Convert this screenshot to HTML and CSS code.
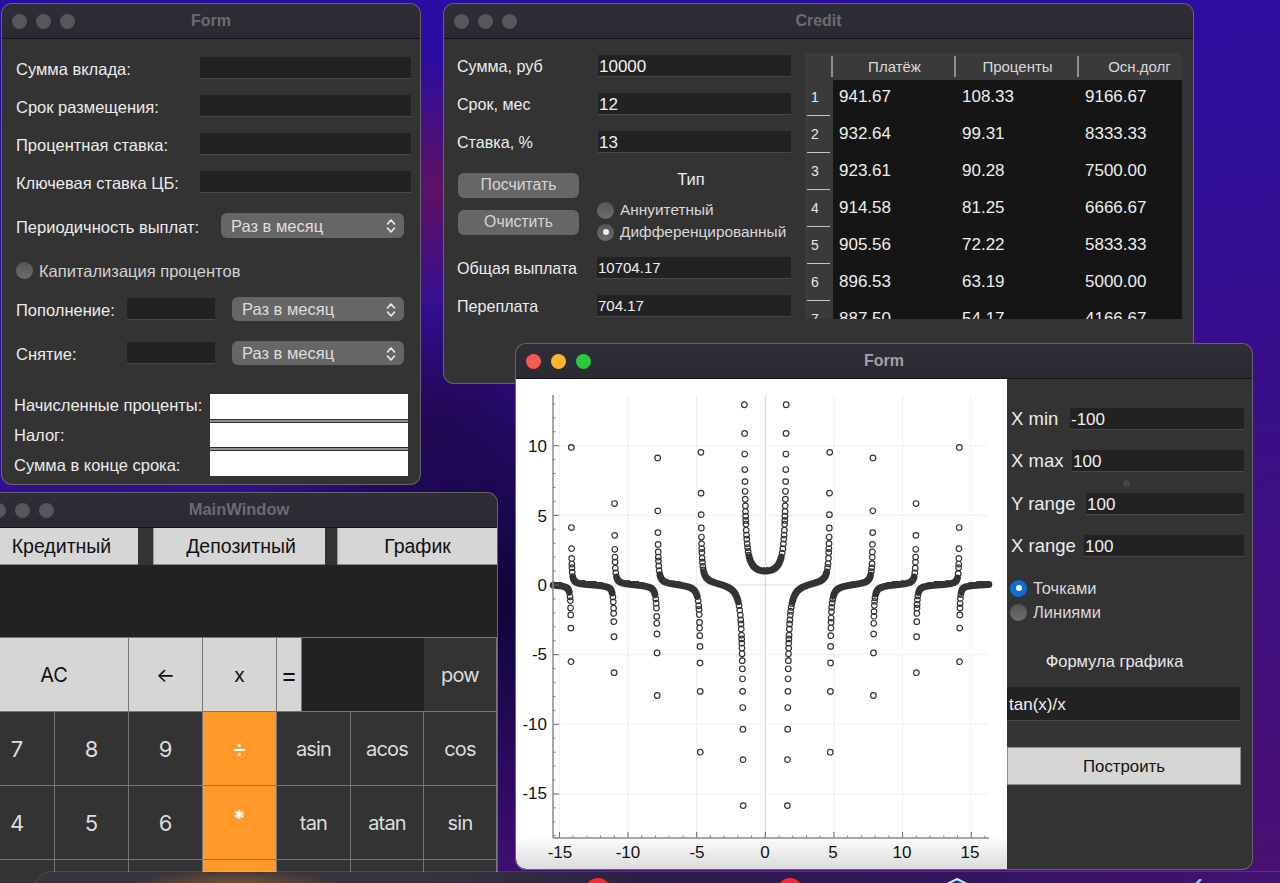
FILE: index.html
```html
<!DOCTYPE html>
<html lang="ru">
<head>
<meta charset="utf-8">
<title>Desktop</title>
<link rel="stylesheet" href="styles.css">
</head>
<body>
<svg class="defs" width="0" height="0"><defs>
  <symbol id="chev" viewBox="0 0 10 16"><path d="M1.5 6 5 2l3.5 4M1.5 10 5 14l3.5-4" fill="none" stroke="#eee" stroke-width="1.6" stroke-linecap="round" stroke-linejoin="round"/></symbol>
</defs></svg>

<section class="win win-deposit">
  <header class="titlebar"><div class="lights"><i></i><i></i><i></i></div><h1>Form</h1></header>
  <div class="dep-body">
    <div class="dep-row"><label>Сумма вклада:</label><div class="field"></div></div>
    <div class="dep-row"><label>Срок размещения:</label><div class="field"></div></div>
    <div class="dep-row"><label>Процентная ставка:</label><div class="field"></div></div>
    <div class="dep-row"><label>Ключевая ставка ЦБ:</label><div class="field"></div></div>
    <div class="dep-period"><label>Периодичность выплат:</label><div class="combo"><span>Раз в месяц</span><svg class="chev"><use href="#chev"/></svg></div></div>
    <div class="dep-cap"><span class="radio"></span><span>Капитализация процентов</span></div>
    <div class="dep-flow first"><label>Пополнение:</label><div class="field"></div><div class="combo"><span>Раз в месяц</span><svg class="chev"><use href="#chev"/></svg></div></div>
    <div class="dep-flow"><label>Снятие:</label><div class="field"></div><div class="combo"><span>Раз в месяц</span><svg class="chev"><use href="#chev"/></svg></div></div>
    <div class="dep-results">
      <div class="res-row"><label>Начисленные проценты:</label><div class="res-field lined"></div></div>
      <div class="res-row"><label>Налог:</label><div class="res-field lined"></div></div>
      <div class="res-row"><label>Сумма в конце срока:</label><div class="res-field"></div></div>
    </div>
  </div>
</section>

<section class="win win-credit">
  <header class="titlebar"><div class="lights"><i></i><i></i><i></i></div><h1>Credit</h1></header>
  <div class="cr-body">
    <div class="cr-left">
      <div class="cr-row"><label>Сумма, руб</label><div class="field val">10000</div></div>
      <div class="cr-row"><label>Срок, мес</label><div class="field val">12</div></div>
      <div class="cr-row"><label>Ставка, %</label><div class="field val">13</div></div>
      <div class="cr-mid">
        <div class="cr-btns"><button class="mac-btn">Посчитать</button><button class="mac-btn">Очистить</button></div>
        <div class="cr-type">
          <div class="cr-type-title">Тип</div>
          <div class="opt"><span class="radio"></span><span>Аннуитетный</span></div>
          <div class="opt"><span class="radio on"></span><span>Дифференцированный</span></div>
        </div>
      </div>
      <div class="cr-row res"><label>Общая выплата</label><div class="field val small">10704.17</div></div>
      <div class="cr-row res second"><label>Переплата</label><div class="field val small">704.17</div></div>
    </div>
    <div class="cr-table">
      <table>
        <thead><tr><th class="corner"></th><th>Платёж</th><th>Проценты</th><th class="last">Осн.долг</th></tr></thead>
        <tbody>
          <tr><th>1</th><td>941.67</td><td>108.33</td><td>9166.67</td></tr>
          <tr><th>2</th><td>932.64</td><td>99.31</td><td>8333.33</td></tr>
          <tr><th>3</th><td>923.61</td><td>90.28</td><td>7500.00</td></tr>
          <tr><th>4</th><td>914.58</td><td>81.25</td><td>6666.67</td></tr>
          <tr><th>5</th><td>905.56</td><td>72.22</td><td>5833.33</td></tr>
          <tr><th>6</th><td>896.53</td><td>63.19</td><td>5000.00</td></tr>
          <tr><th>7</th><td>887.50</td><td>54.17</td><td>4166.67</td></tr>
        </tbody>
      </table>
    </div>
  </div>
</section>

<section class="win win-main">
  <header class="titlebar"><div class="lights"><i></i><i></i><i></i></div><h1>MainWindow</h1></header>
  <div class="tabs">
    <button class="tab t1">Кредитный</button>
    <button class="tab t2">Депозитный</button>
    <button class="tab t3">График</button>
  </div>
  <div class="display"></div>
  <div class="keys">
    <div class="key light s2">AC</div><div class="key light">←</div><div class="key light">x</div><div class="key light eq">=</div><div class="key box s2"></div><div class="key fn">pow</div>
    <div class="key">7</div><div class="key">8</div><div class="key">9</div><div class="key op">÷</div><div class="key fn s2">asin</div><div class="key fn">acos</div><div class="key fn">cos</div>
    <div class="key">4</div><div class="key">5</div><div class="key">6</div><div class="key op star">*</div><div class="key fn s2">tan</div><div class="key fn">atan</div><div class="key fn">sin</div>
    <div class="key"></div><div class="key"></div><div class="key"></div><div class="key op"></div><div class="key fn s2"></div><div class="key fn"></div><div class="key fn"></div>
  </div>
</section>

<section class="win win-graph">
  <header class="titlebar active"><div class="lights"><i class="red"></i><i class="yellow"></i><i class="green"></i></div><h1>Form</h1></header>
  <div class="gr-body">
    <div class="plot">
      <svg id="plot" width="491" height="489" viewBox="0 0 491 489">
        <g id="grid"></g>
        <g id="dots"></g>
        <g id="axes"></g>
        <g class="ylabels">
          <text x="31" y="73">10</text><text x="31" y="143">5</text><text x="31" y="212">0</text>
          <text x="31" y="281">-5</text><text x="31" y="351">-10</text><text x="31" y="420">-15</text>
        </g>
        <g class="xlabels">
          <text x="44" y="479">-15</text><text x="112" y="479">-10</text><text x="181" y="479">-5</text><text x="249" y="479">0</text>
          <text x="317" y="479">5</text><text x="386" y="479">10</text><text x="454" y="479">15</text>
        </g>
      </svg>
    </div>
    <div class="side">
      <div class="side-row"><label class="l-xmin">X min</label><div class="field val">-100</div></div>
      <div class="side-row"><label class="l-xmax">X max</label><div class="field val">100</div></div>
      <div class="side-row"><label class="l-yr">Y range</label><div class="field val">100</div></div>
      <div class="side-row"><label class="l-xr">X range</label><div class="field val">100</div></div>
      <span class="stray"></span>
      <div class="side-opts">
        <div class="opt"><span class="radio blue"></span><span>Точками</span></div>
        <div class="opt"><span class="radio"></span><span>Линиями</span></div>
      </div>
      <div class="formula-title">Формула графика</div>
      <div class="field val formula">tan(x)/x</div>
      <button class="build">Построить</button>
    </div>
  </div>
</section>

<div class="dock">
  <span class="dock-icon red one"></span>
  <span class="dock-icon red two"></span>
  <svg class="dock-hex" width="24" height="12" viewBox="0 0 24 12"><path d="M12 1 22 6v8H2V6z" fill="#1d3f86" stroke="#dfe8f5" stroke-width="2"/></svg>
  <svg class="dock-tick" width="8" height="5" viewBox="0 0 8 5"><path d="M1 5 6 0" stroke="#9cc4ea" stroke-width="2.5"/></svg>
</div>
<script src="script.js"></script>
</body>
</html>
```
FILE: styles.css
```css
* { box-sizing: border-box; }
html, body { margin: 0; height: 100%; overflow: hidden; }
body {
  position: relative;
  width: 1280px;
  height: 883px;
  font-family: "Liberation Sans", Arial, sans-serif;
  color: #ececec;
  font-size: 16.5px;
  background:
    radial-gradient(110px 130px at 432px 190px, #5e1262 0, rgba(94,18,98,0) 100%),
    radial-gradient(300px 300px at 500px 600px, #10043a 0, rgba(16,4,58,0) 100%),
    radial-gradient(120px 130px at 430px 430px, #2a0a60 0, rgba(42,10,96,0) 100%),
    linear-gradient(170deg, #2a0ca6 0, #2f0e9a 30%, #3a0f86 60%, #4a0f72 100%);
}
.defs { position: absolute; }
label { display: block; padding-top: 1px; line-height: 18px; }

/* windows on the desktop */
.win {
  position: absolute;
  background: #333;
  border-radius: 10px;
  overflow: hidden;
  box-shadow: 0 0 0 1px #66636b;
}
.win-deposit { left: 2px; top: 4px; width: 418px; height: 480px; }
.win-credit { left: 444px; top: 4px; width: 749px; height: 379px; }
.win-main { left: -20px; top: 493px; width: 517px; height: 400px; }
.win-graph { left: 516px; top: 344px; width: 736px; height: 525px; }

.titlebar {
  height: 35px;
  display: grid;
  grid-template-columns: 1fr auto 1fr;
  align-items: center;
  padding: 0 10px;
  background: linear-gradient(#2f2d35, #2b2931);
  border-bottom: 1px solid #141318;
}
.titlebar h1 {
  margin: 0 0 1px;
  grid-column: 2;
  grid-row: 1;
  font-size: 16px;
  font-weight: 700;
  color: #6c6a72;
}
.titlebar.active h1 { color: #a2a1a6; }
.lights { grid-column: 1; grid-row: 1; display: flex; gap: 9px; }
.lights i { width: 15px; height: 15px; border-radius: 50%; background: #57565d; }
.lights .red { background: #fb5a54; }
.lights .yellow { background: #fdb52f; }
.lights .green { background: #28c83f; }
.win-graph .lights { gap: 10px; }
.win-main .titlebar { padding-left: 11px; }
.win-main .titlebar h1 { font-size: 16.5px; }

.field {
  background: #222;
  border-bottom: 1px solid #484848;
  height: 22px;
}
.val { font-size: 17px; line-height: 23px; color: #f0f0f0; padding-left: 1px; overflow: hidden; }
.val.small { font-size: 15px; line-height: 22px; }

.combo {
  height: 25px;
  background: #666;
  border-radius: 6px;
  display: flex;
  align-items: center;
  justify-content: space-between;
  padding: 1px 8px 0 10px;
  color: #dedede;
}
.chev { width: 10px; height: 16px; }

.radio {
  display: inline-block;
  flex: none;
  width: 17px;
  height: 17px;
  border-radius: 50%;
  background: linear-gradient(#555, #6d6d6d);
  position: relative;
}
.radio.on::after, .radio.blue::after {
  content: "";
  position: absolute;
  left: 5.5px;
  top: 5.5px;
  width: 6px;
  height: 6px;
  border-radius: 50%;
  background: #eee;
}
.radio.blue { background: #0a6fdc; }
.radio.blue::after { background: #fff; }
.opt { display: flex; align-items: center; gap: 6px; color: #d8d8d8; }

/* deposit form */
.dep-body { padding: 18px 9px 0 14px; }
.dep-row {
  display: grid;
  grid-template-columns: 184px 211px;
  align-items: center;
  height: 22px;
  margin-bottom: 16px;
}
.dep-period {
  display: grid;
  grid-template-columns: 205px 183px;
  align-items: center;
  margin-top: 20px;
}
.dep-period label { padding-top: 3px; }
.dep-cap { display: flex; align-items: center; gap: 6px; margin-top: 23px; height: 18px; color: #d2d2d2; }
.dep-cap span:last-child { padding-top: 3px; }
.dep-flow {
  display: grid;
  grid-template-columns: 111px 88px 189px;
  align-items: center;
  margin-top: 20px;
}
.dep-flow.first { margin-top: 18px; }
.dep-flow .combo { margin-left: 17px; width: 172px; height: 24px; }
.dep-results { margin: 29px 0 0 -2px; display: flex; flex-direction: column; gap: 4px; }
.res-row {
  display: grid;
  grid-template-columns: 196px 198px;
  align-items: center;
  height: 24.5px;
}
.res-row:first-child label { padding: 0 0 3px; }
.res-row:last-child label { padding-top: 4px; }
.res-field { height: 100%; background: #fff; }
.res-field.lined { box-shadow: 0 1px 0 #2b2b2b, 0 3px 0 #8d8d8d; }

/* credit */
.cr-body { display: flex; padding: 14px 11px 0 13px; gap: 14px; font-size: 16.1px; }
.cr-left { width: 334px; flex: none; }
.cr-row {
  display: grid;
  grid-template-columns: 141px 193px;
  align-items: center;
  height: 22px;
  margin-top: 16px;
}
.cr-row label { padding-top: 0; }
.cr-row:first-child { margin-top: 2px; }
.cr-row.res { margin-top: 0; }
.cr-row.res.second { margin-top: 16px; }
.cr-row.res .field { margin-left: -1px; width: 194px; }
.cr-mid { display: flex; height: 104px; padding-top: 20px; }
.cr-btns { width: 141px; flex: none; display: flex; flex-direction: column; gap: 12px; padding-left: 1px; }
.mac-btn {
  width: 121px;
  height: 25px;
  border: 0;
  padding: 0 0 2px;
  border-radius: 6px;
  background: #666;
  color: #d6d6d6;
  font: 15.8px "Liberation Sans", Arial, sans-serif;
}
.cr-type { margin-left: -1px; width: 194px; }
.cr-type-title { text-align: center; line-height: 18px; margin: -3px 6px 11px 0; font-size: 16.5px; }
.cr-type .opt { height: 22px; gap: 6px; font-size: 15.4px; }
.cr-table { width: 377px; height: 266px; overflow: hidden; flex: none; background: #151515; }
table { border-collapse: collapse; table-layout: fixed; width: 377px; }
thead th {
  height: 27px;
  padding: 0;
  background: #3a3a3a;
  font-size: 15px;
  font-weight: 400;
  color: #d8d8d8;
  position: relative;
}
thead th:nth-child(1) { width: 28px; }
thead th:nth-child(2), thead th:nth-child(3) { width: 123px; }
thead th.last { padding-left: 18px; }
thead th:not(.corner)::before {
  content: "";
  position: absolute;
  left: -2px;
  top: 3px;
  bottom: 3px;
  width: 2px;
  background: #8f8f8f;
}
tbody th {
  height: 37px;
  padding: 0 0 4px 6px;
  background: #3a3a3a;
  font-size: 14px;
  font-weight: 400;
  text-align: left;
  color: #e8e8e8;
  position: relative;
}
tbody th::after {
  content: "";
  position: absolute;
  left: 2px;
  right: 3px;
  bottom: 1px;
  height: 1px;
  background: #c4c4c4;
}
tbody td {
  padding: 0 0 3px 6px;
  font-size: 17px;
  color: #eee;
}

/* calculator */
.tabs { display: flex; height: 37px; }
.tab {
  height: 37px;
  padding: 0;
  border: 0;
  border-bottom: 1px solid #8a8a8a;
  background: #d6d6d6;
  color: #111;
  font: 19.5px "Liberation Sans", Arial, sans-serif;
}
.t1 { width: 158px; padding-left: 5px; }
.t2 { width: 172px; margin-left: 15px; border-left: 1px solid #999; padding-left: 3px; }
.t3 { width: 160px; margin-left: 12px; border-left: 1px solid #999; }
.display { height: 72px; background: #222; }
.keys {
  display: grid;
  grid-template-columns: 75px 74px 74px 74px 25px 49px 73px 73px;
  grid-auto-rows: 74px;
  border-top: 1px solid #777;
}
.key {
  display: flex;
  align-items: center;
  justify-content: center;
  background: #333;
  border-right: 1px solid #777;
  border-bottom: 1px solid #777;
  color: #ddd;
  font: 22px Inter, "Liberation Sans", sans-serif;
}
.key.fn { font-size: 20px; letter-spacing: -0.8px; }
.key.s2 { grid-column: span 2; }
.key.light { background: #d6d6d6; color: #111; font-size: 20px; }
.key.light.eq { font-size: 25px; }
.key.box { background: #222; border-right: 0; }
.key.op { background: #ff9a2a; color: #fff; font-size: 24px; }
.key.star { padding: 0 0 10px; font-weight: 700; font-size: 22px; }

/* graph */
.gr-body { display: flex; height: 490px; }
.plot {
  width: 491px;
  height: 490px;
  flex: none;
  background: linear-gradient(#fff 0, #fff 93%, #dcdcdc 100%);
  border-bottom-left-radius: 10px;
}
.plot svg { display: block; }
.plot text { font: 17px "Liberation Sans", Arial, sans-serif; fill: #111; }
.ylabels text { text-anchor: end; }
.xlabels text { text-anchor: middle; }
.side { flex: 1; position: relative; padding-top: 29px; font-size: 16.5px; }
.side-row { display: flex; align-items: center; height: 22px; margin: 0 8px 20px 4px; font-size: 18.5px; }
.side-row:nth-child(2) { margin-bottom: 21px; }
.side-row label { padding-top: 0; }
.side-row .field { flex: 1; }
.l-xmin { width: 59px; }
.l-xmax { width: 61px; }
.l-yr { width: 75px; }
.l-xr { width: 73px; }
.stray { position: absolute; left: 116px; top: 101px; width: 7px; height: 7px; border-radius: 50%; background: #474747; }
.side-opts { margin: -1px 0 0 3px; }
.side-opts .opt { height: 24px; gap: 6px; }
.formula-title { margin: 24px 0 0; height: 26px; line-height: 26px; text-align: center; padding-right: 30px; color: #e8e8e8; }
.formula { height: 34px; width: 233px; line-height: 35px; margin-top: 13px; font-size: 17px; padding-left: 2px; }
.build {
  display: block;
  width: 234px;
  height: 38px;
  margin-top: 26px;
  padding: 1px 0 0;
  background: #d6d6d6;
  border: 1px solid #8e8e8e;
  color: #111;
  font: 16.8px "Liberation Sans", Arial, sans-serif;
}

/* dock */
.dock {
  position: absolute;
  left: 36px;
  right: -20px;
  top: 872px;
  height: 40px;
  border-radius: 16px 0 0 0;
  box-shadow: 0 0 0 1px rgba(255,255,255,.12);
  background:
    radial-gradient(110px 24px at 200px 20px, rgba(228,138,34,.5) 0, rgba(228,138,34,0) 100%),
    linear-gradient(90deg, #39343d 0, #39343d 30%, #2a1c48 50%, #34155f 75%, #431270 100%);
}
.dock-icon { position: absolute; width: 26px; height: 26px; border-radius: 50%; top: 6px; }
.dock-icon.red { background: #ee2f35; }
.dock-icon.one { left: 549px; }
.dock-icon.two { left: 741px; }
.dock-hex { position: absolute; left: 909px; top: 6px; }
.dock-tick { position: absolute; left: 1159px; top: 7px; }
```
FILE: script.js
```js
(function () {
  var NS = 'http://www.w3.org/2000/svg';
  var X0 = 249.3, SX = 13.73, Y0 = 206, SY = 13.93;
  var L = 37, R = 473, T = 16, B = 459;
  var grid = document.getElementById('grid');
  var dots = document.getElementById('dots');
  var axes = document.getElementById('axes');

  function line(parent, x1, y1, x2, y2, color, w) {
    var l = document.createElementNS(NS, 'line');
    l.setAttribute('x1', x1); l.setAttribute('y1', y1);
    l.setAttribute('x2', x2); l.setAttribute('y2', y2);
    l.setAttribute('stroke', color); l.setAttribute('stroke-width', w);
    parent.appendChild(l);
  }

  var i, p;
  for (i = -15; i <= 16; i++) {
    p = X0 + i * SX;
    if (i % 5 === 0) {
      line(grid, p, T, p, B, i === 0 ? '#cfcfcf' : '#eeeeee', 1);
      line(axes, p, B - 6, p, B, '#666', 1);
    } else {
      line(axes, p, B - 2.5, p, B, '#777', 1);
    }
  }
  for (i = -18; i <= 13; i++) {
    p = Y0 - i * SY;
    if (i % 5 === 0) {
      line(grid, L, p, R, p, i === 0 ? '#dddddd' : '#efefef', 1);
      line(axes, L, p, L + 6, p, '#666', 1);
    } else {
      line(axes, L, p, L + 2.5, p, '#777', 1);
    }
  }
  line(axes, L, T, L, B, '#8a8a8a', 1.5);
  line(axes, L, B, R, B, '#8a8a8a', 1.5);

  // y = tan(x)/x sampled every 0.01; on steep stretches near an asymptote
  // rings closer than a ring's gap are merged, as the plotted markers read.
  var d = '';
  var r = 2.8;
  var lastX = null, lastY = null;
  var prevPy = null;
  for (i = -1600; i <= 1650; i++) {
    var x = i / 100;
    if (i === 0) continue;
    var y = Math.tan(x) / x;
    var px = X0 + x * SX, py = Y0 - y * SY;
    var steep = prevPy !== null && Math.abs(py - prevPy) > 0.55;
    prevPy = py;
    if (px < L || px > R || py < T || py > B) continue;
    if (steep && lastX !== null && Math.abs(py - lastY) < 3.6) continue;
    d += 'M' + (px - r).toFixed(2) + ' ' + py.toFixed(2) +
         'a' + r + ' ' + r + ' 0 1 0 ' + (2 * r) + ' 0a' + r + ' ' + r + ' 0 1 0 ' + (-2 * r) + ' 0';
    lastX = px; lastY = py;
  }
  var path = document.createElementNS(NS, 'path');
  path.setAttribute('d', d);
  path.setAttribute('fill', 'none');
  path.setAttribute('stroke', '#333');
  path.setAttribute('stroke-width', '1.2');
  dots.appendChild(path);
})();
```
